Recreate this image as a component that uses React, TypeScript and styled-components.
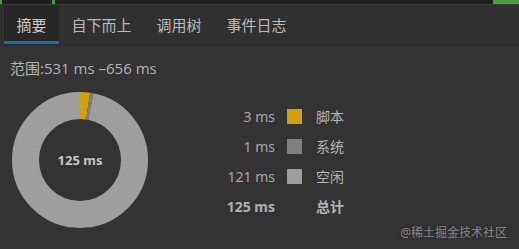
import styled, { createGlobalStyle } from "styled-components";

const GlobalStyle = createGlobalStyle`
  html, body {
    margin: 0;
    padding: 0;
    background: #333333;
  }
  body {
    font-family: "Noto Sans", "Noto Sans CJK SC", sans-serif;
    color: #bdbdbd;
  }
`;

interface Slice {
  label: string;
  value: number;
  color: string;
}

const slices: Slice[] = [
  { label: "脚本", value: 3, color: "#d39f12" },
  { label: "系统", value: 1, color: "#7f7f7f" },
  { label: "空闲", value: 121, color: "#9e9e9e" },
];

const tabs = ["摘要", "自下而上", "调用树", "事件日志"];

const Donut = ({ data }: { data: Slice[] }) => {
  const total = data.reduce((s, d) => s + d.value, 0);
  const r = 54.5;
  const c = 2 * Math.PI * r;
  let offset = 0;
  return (
    <svg width="140" height="140" viewBox="0 0 140 140">
      <g transform="rotate(-90 70 70)">
        {data.map((d) => {
          const len = (d.value / total) * c;
          const el = (
            <circle
              key={d.label}
              cx="70"
              cy="70"
              r={r}
              fill="none"
              stroke={d.color}
              strokeWidth="27"
              strokeDasharray={`${len} ${c - len}`}
              strokeDashoffset={-offset}
            />
          );
          offset += len;
          return el;
        })}
      </g>
      <text
        x="70"
        y="75"
        textAnchor="middle"
        fontSize="13"
        fontWeight="700"
        fill="#c4c4c4"
        fontFamily="Noto Sans, sans-serif"
      >
        {total} ms
      </text>
    </svg>
  );
};

const App = () => {
  const total = slices.reduce((s, d) => s + d.value, 0);
  return (
    <>
      <GlobalStyle />
      <Page>
        <TopStrip>
          <StripMark $left={0} $width={2} />
          <StripMark $left={52} $width={3} />
          <StripMark $left={493} $width={26} />
        </TopStrip>
        <TabBar>
          {tabs.map((t, i) => (
            <Tab key={t} $active={i === 0}>
              {t}
            </Tab>
          ))}
        </TabBar>
        <Content>
          <Range>范围:531 ms –656 ms</Range>
          <ChartRow>
            <Donut data={slices} />
            <Legend>
              {slices.map((s) => (
                <LegendRow key={s.label}>
                  <Value>{s.value} ms</Value>
                  <Swatch $color={s.color} />
                  <Label>{s.label}</Label>
                </LegendRow>
              ))}
              <LegendRow>
                <Value $bold>{total} ms</Value>
                <span />
                <Label $bold>总计</Label>
              </LegendRow>
            </Legend>
          </ChartRow>
        </Content>
        <Watermark>@稀土掘金技术社区</Watermark>
      </Page>
    </>
  );
};

const Page = styled.div`
  position: relative;
  width: 519px;
  height: 249px;
  overflow: hidden;
  background: #333333;
`;

const TopStrip = styled.div`
  position: relative;
  height: 4px;
  background: #1f1f1f;
  border-bottom: 1px solid #3c3c3c;
`;

const StripMark = styled.div<{ $left: number; $width: number }>`
  position: absolute;
  top: 0;
  left: ${(p) => p.$left}px;
  width: ${(p) => p.$width}px;
  height: 4px;
  background: #4f9a45;
`;

const TabBar = styled.div`
  display: flex;
  height: 39px;
  padding-left: 4px;
  background: #303030;
  border-bottom: 2px solid #2b2b2b;
`;

const Tab = styled.div<{ $active?: boolean }>`
  display: flex;
  align-items: center;
  padding: 0 12.5px;
  font-size: 15px;
  color: ${(p) => (p.$active ? "#c8c8c8" : "#bbbbbb")};
  background: ${(p) => (p.$active ? "#272727" : "transparent")};
  border-bottom: 3px solid ${(p) => (p.$active ? "#1c6aa8" : "transparent")};
  padding-top: 2px;
`;

const Content = styled.div`
  padding: 12px 0 0 10px;
`;

const Range = styled.div`
  font-family: "Open Sans", "Noto Sans CJK SC", sans-serif;
  font-size: 15px;
  line-height: 20px;
  color: #b4b4b4;
`;

const ChartRow = styled.div`
  display: flex;
  align-items: flex-start;
  margin-top: 12px;
`;

const Legend = styled.div`
  display: flex;
  flex-direction: column;
  margin-left: 65px;
  margin-top: 11px;
`;

const LegendRow = styled.div`
  display: grid;
  grid-template-columns: 60px 15px auto;
  column-gap: 12px;
  align-items: center;
  height: 30px;
  font-size: 14px;
`;

const Value = styled.span<{ $bold?: boolean }>`
  text-align: right;
  font-weight: ${(p) => (p.$bold ? 700 : 400)};
  color: ${(p) => (p.$bold ? "#b0b0b0" : "#a8a8a8")};
`;

const Swatch = styled.span<{ $color: string }>`
  width: 15px;
  height: 15px;
  background: ${(p) => p.$color};
`;

const Label = styled.span<{ $bold?: boolean }>`
  margin-left: 2px;
  font-weight: ${(p) => (p.$bold ? 700 : 400)};
  color: #b4b4b4;
`;

const Watermark = styled.div`
  position: absolute;
  right: 12px;
  bottom: 8px;
  font-size: 12px;
  color: #8a8a8a;
  text-shadow: 0 0 2px #222;
`;

export default App;
